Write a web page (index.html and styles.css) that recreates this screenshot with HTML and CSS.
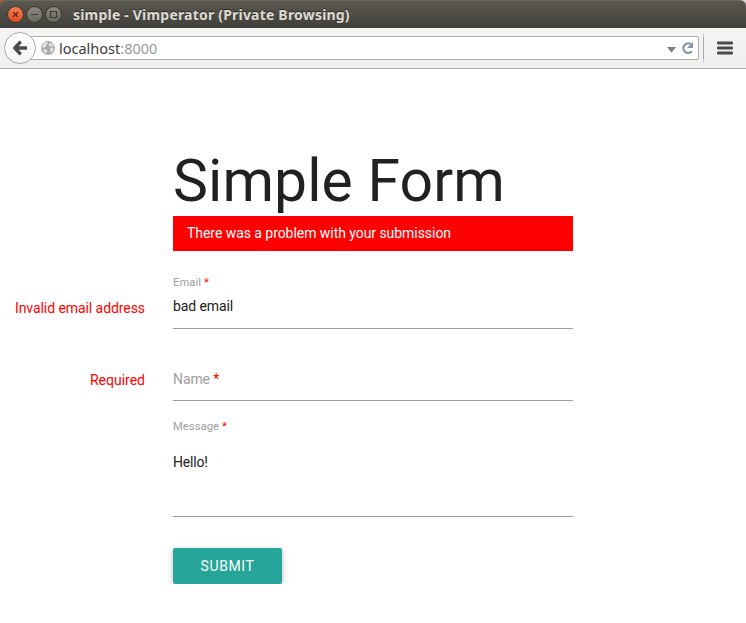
FILE: index.html
```html
<!DOCTYPE html>
<html lang="en">
<head>
<meta charset="utf-8">
<title>simple</title>
<link rel="stylesheet" href="styles.css">
</head>
<body>
<div class="desktop"><header class="titlebar">
  <svg class="controls" width="56" height="20" viewBox="0 0 56 20">
    <defs>
      <linearGradient id="close" x2="0" y2="1"><stop stop-color="#f58058"/><stop offset="1" stop-color="#e04d1b"/></linearGradient>
      <linearGradient id="plain" x2="0" y2="1"><stop stop-color="#8b897f"/><stop offset="1" stop-color="#68665e"/></linearGradient>
    </defs>
    <g stroke="#35332e"><circle cx="9.5" cy="9.5" r="8" fill="url(#close)"/><circle cx="28.5" cy="9.5" r="8" fill="url(#plain)"/><circle cx="47.5" cy="9.5" r="8" fill="url(#plain)"/></g>
    <g fill="none" stroke="#3d3b36" stroke-width="1.2"><path d="M7 7l5 5M12 7l-5 5" stroke="#65230d"/><path d="M25 9.5h7M44.500 6.500h6v6h-6z"/></g>
  </svg>
  <span class="title">simple - Vimperator (Private Browsing)</span>
</header></div>
<nav class="toolbar">
  <button class="back" aria-label="Back"><svg width="16" height="16" viewBox="0 0 16 16" fill="none" stroke="#4c4c4c" stroke-width="3.400" stroke-linejoin="round"><path d="M8.800 1.700L2.800 8l6 6.300M3.300 8H15"/></svg></button>
  <div class="address">
    <svg class="globe" width="14" height="14" viewBox="0 0 14 14"><circle cx="7" cy="7" r="6.900" fill="#a9a9a9"/><path d="M2 3l3-2 2 .5-.5 1.300L5 3.500l1 1-2 1.200L3.500 7 1 6zM8.500 2.500l2.500-.5 2 3-1 .5-1.500-1L9 5.500l-1.500-1zM2 8l3 .5 1.500 1.500L5 12.500 3.500 12zM8.500 7l3-.5 1 2-2 3.500-1-1 .2-2z" fill="#e5e5e5"/></svg>
    <span class="url">localhost<span class="port">:8000</span></span>
    <svg class="address-actions" width="28" height="14" viewBox="0 0 28 14"><path d="M1 6h9L5.500 11.500z" fill="#7b7b7b"/><path d="M25.800 10.300A4.800 4.800 0 1 1 25 3.300" fill="none" stroke="#8796a3" stroke-width="2.200"/><path d="M27 1v6h-6z" fill="#8796a3"/></svg>
  </div>
  <span class="separator"></span>
  <svg class="menu" width="16" height="14" viewBox="0 0 16 14"><g fill="#4b4b4b"><rect y=".5" width="16" height="3" rx="1.300"/><rect y="5.500" width="16" height="3" rx="1.300"/><rect y="10.500" width="16" height="3" rx="1.300"/></g></svg>
</nav>
<main>
  <h1>Simple Form</h1>
  <p class="alert">There was a problem with your submission</p>
  <form>
    <div class="row email"><span class="error">Invalid email address</span><div class="field"><label>Email <b>*</b></label><div class="value">bad email</div></div></div>
    <div class="row name"><span class="error">Required</span><div class="field"><label>Name <b>*</b></label></div></div>
    <div class="row message"><div class="field"><label>Message <b>*</b></label><div class="value">Hello!</div></div></div>
    <button type="button" class="submit">SUBMIT</button>
  </form>
</main>
</body>
</html>
```

FILE: styles.css
```css
* { box-sizing: border-box; }
body { margin: 0; background: #fff; color: #212121; font: 14px/21px Roboto, sans-serif; }
button { font: inherit; padding: 0; border: 0; }
svg { display: block; flex: none; }

.desktop { background: linear-gradient(90deg, #a65a3c 50%, #ddd 50%); }
.titlebar { height: 28px; display: flex; align-items: center; padding: 0 6px; border-radius: 6px 6px 0 0; background: linear-gradient(#5b584f, #403f3a); border-top: 1px solid #6a675e; }
.controls { margin-top: 1px; }
.title { margin-left: 11px; margin-top: 1px; color: #dfdbd2; font: bold 14px/20px "Noto Sans", sans-serif; letter-spacing: .2px; white-space: nowrap; text-shadow: 0 -1px #2b2a27; }

.toolbar { height: 41px; display: flex; align-items: center; padding: 0 13px 0 4px; background: linear-gradient(#f6f5f4, #efeeed); border-bottom: 1px solid #afaca8; }
.back { width: 32px; height: 32px; flex: none; display: grid; place-items: center; border: 1px solid #a3acb7; border-radius: 50%; background: linear-gradient(#fff, #f4f4f4); z-index: 1; }
.address { flex: 1; height: 24px; margin-left: -7px; padding: 0 4px 0 11px; display: flex; align-items: center; background: #fff; border: 1px solid #b2afab; border-radius: 2px; }
.url { flex: 1; margin-left: 4px; color: #3c3c3c; font: 14.5px/22px "Noto Sans", sans-serif; }
.port { color: #999; }
.separator { width: 1px; height: 32px; margin: 0 13px 0 4px; background: linear-gradient(transparent, #a5abb2 20%, #a5abb2 80%, transparent); }
.menu { margin-bottom: 1px; }

main { width: 573px; padding-top: 79px; }
h1 { margin: 0 0 3px 173px; font-size: 58.800px; font-weight: 400; line-height: 65px; letter-spacing: .1px; white-space: nowrap; }
.alert { margin: 0 0 0 173px; padding: 7px 14px; background: #f00; color: #fff; letter-spacing: -.05px; }

.row { display: grid; grid-template-columns: 145px 400px; column-gap: 28px; }
.error { color: #f00; text-align: right; }
.field { grid-column: 2; border-bottom: 1px solid #9e9e9e; }
.field label { display: block; color: #9e9e9e; font-size: 11.200px; line-height: 16px; letter-spacing: .08px; }
.field b { color: #f00; font-weight: 400; }
.value { letter-spacing: -.1px; }
.email { height: 78px; }
.email .error { padding-top: 47px; letter-spacing: -.07px; }
.email .field { padding-top: 24px; }
.email .value { padding-top: 5px; }
.name { height: 72px; }
.name .error { padding-top: 41px; }
.name label { padding-top: 40px; font-size: 14px; line-height: 21px; letter-spacing: -.1px; }
.message { height: 116px; }
.message .field { padding-top: 18px; }
.message .value { padding-top: 17px; letter-spacing: -.2px; }
.submit { display: block; width: 109px; height: 36px; margin: 31px 0 0 173px; color: #fff; background: #26a69a; border-radius: 2px; letter-spacing: .6px; box-shadow: 0 2px 5px rgba(0,0,0,.16), 0 2px 10px rgba(0,0,0,.12); }
```
